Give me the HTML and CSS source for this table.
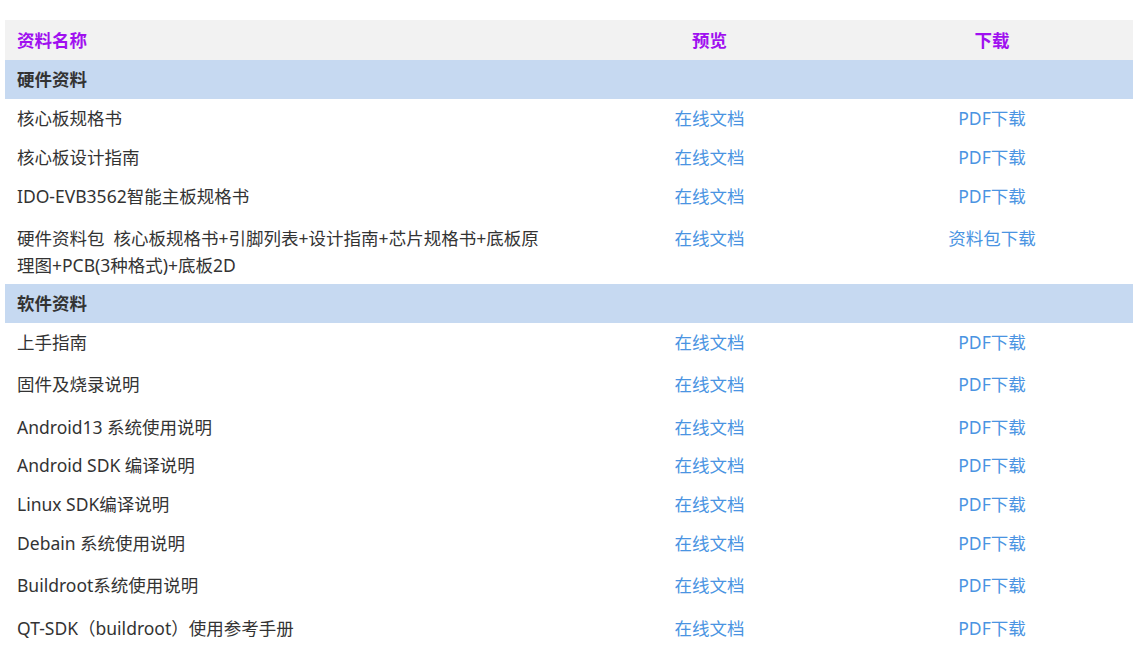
FILE: index.html
```html
<!DOCTYPE html>
<html lang="zh-CN">
<head>
<meta charset="utf-8">
<title>资料下载</title>
<link rel="stylesheet" href="styles.css">
</head>
<body>
<div class="doc-table">
  <div class="row head">
    <div class="c name">资料名称</div>
    <div class="c mid">预览</div>
    <div class="c mid">下载</div>
  </div>
  <div class="row section">
    <div class="c name">硬件资料</div>
    <div class="c"></div>
    <div class="c"></div>
  </div>
  <div class="row">
    <div class="c name">核心板规格书</div>
    <div class="c mid"><a href="#">在线文档</a></div>
    <div class="c mid"><a href="#">PDF下载</a></div>
  </div>
  <div class="row">
    <div class="c name">核心板设计指南</div>
    <div class="c mid"><a href="#">在线文档</a></div>
    <div class="c mid"><a href="#">PDF下载</a></div>
  </div>
  <div class="row h42">
    <div class="c name">IDO-EVB3562智能主板规格书</div>
    <div class="c mid"><a href="#">在线文档</a></div>
    <div class="c mid"><a href="#">PDF下载</a></div>
  </div>
  <div class="row multi">
    <div class="c name">硬件资料包&nbsp;&nbsp;核心板规格书+引脚列表+设计指南+芯片规格书+底板原理图+PCB(3种格式)+底板2D</div>
    <div class="c mid"><a href="#">在线文档</a></div>
    <div class="c mid"><a href="#">资料包下载</a></div>
  </div>
  <div class="row section">
    <div class="c name">软件资料</div>
    <div class="c"></div>
    <div class="c"></div>
  </div>
  <div class="row h42">
    <div class="c name">上手指南</div>
    <div class="c mid"><a href="#">在线文档</a></div>
    <div class="c mid"><a href="#">PDF下载</a></div>
  </div>
  <div class="row h43">
    <div class="c name">固件及烧录说明</div>
    <div class="c mid"><a href="#">在线文档</a></div>
    <div class="c mid"><a href="#">PDF下载</a></div>
  </div>
  <div class="row short">
    <div class="c name">Android13 系统使用说明</div>
    <div class="c mid"><a href="#">在线文档</a></div>
    <div class="c mid"><a href="#">PDF下载</a></div>
  </div>
  <div class="row">
    <div class="c name">Android SDK 编译说明</div>
    <div class="c mid"><a href="#">在线文档</a></div>
    <div class="c mid"><a href="#">PDF下载</a></div>
  </div>
  <div class="row">
    <div class="c name">Linux SDK编译说明</div>
    <div class="c mid"><a href="#">在线文档</a></div>
    <div class="c mid"><a href="#">PDF下载</a></div>
  </div>
  <div class="row h42">
    <div class="c name">Debain 系统使用说明</div>
    <div class="c mid"><a href="#">在线文档</a></div>
    <div class="c mid"><a href="#">PDF下载</a></div>
  </div>
  <div class="row h43">
    <div class="c name">Buildroot系统使用说明</div>
    <div class="c mid"><a href="#">在线文档</a></div>
    <div class="c mid"><a href="#">PDF下载</a></div>
  </div>
  <div class="row">
    <div class="c name">QT-SDK（buildroot）使用参考手册</div>
    <div class="c mid"><a href="#">在线文档</a></div>
    <div class="c mid"><a href="#">PDF下载</a></div>
  </div>
</div>
</body>
</html>
```

FILE: styles.css
```css
html, body {
  margin: 0;
  padding: 0;
  background: #ffffff;
}

body {
  font-family: "Noto Sans", "Noto Sans CJK SC", sans-serif;
  font-size: 17.5px;
  color: #333333;
  padding: 20px 8px 0 5px;
}

.doc-table {
  width: 1128px;
}

.row {
  display: grid;
  grid-template-columns: 563px 283px 282px;
  min-height: 39px;
  box-sizing: border-box;
}

.row.h42 { min-height: 42px; }
.row.h43 { min-height: 43px; }
.row.short { min-height: 38px; }

.c {
  padding: 6px 12px;
  line-height: 27px;
}

.multi .c,
.short .c {
  padding-bottom: 5px;
}

.mid {
  text-align: center;
}

.head {
  background: #f2f2f2;
  min-height: 40px;
}

.head .c {
  color: #a010f0;
  font-weight: bold;
  padding-top: 6.5px;
}

.section {
  background: #c6d9f1;
}

.section .c {
  font-weight: bold;
  color: #333333;
}

a {
  color: #4a94e2;
  text-decoration: none;
}
```
